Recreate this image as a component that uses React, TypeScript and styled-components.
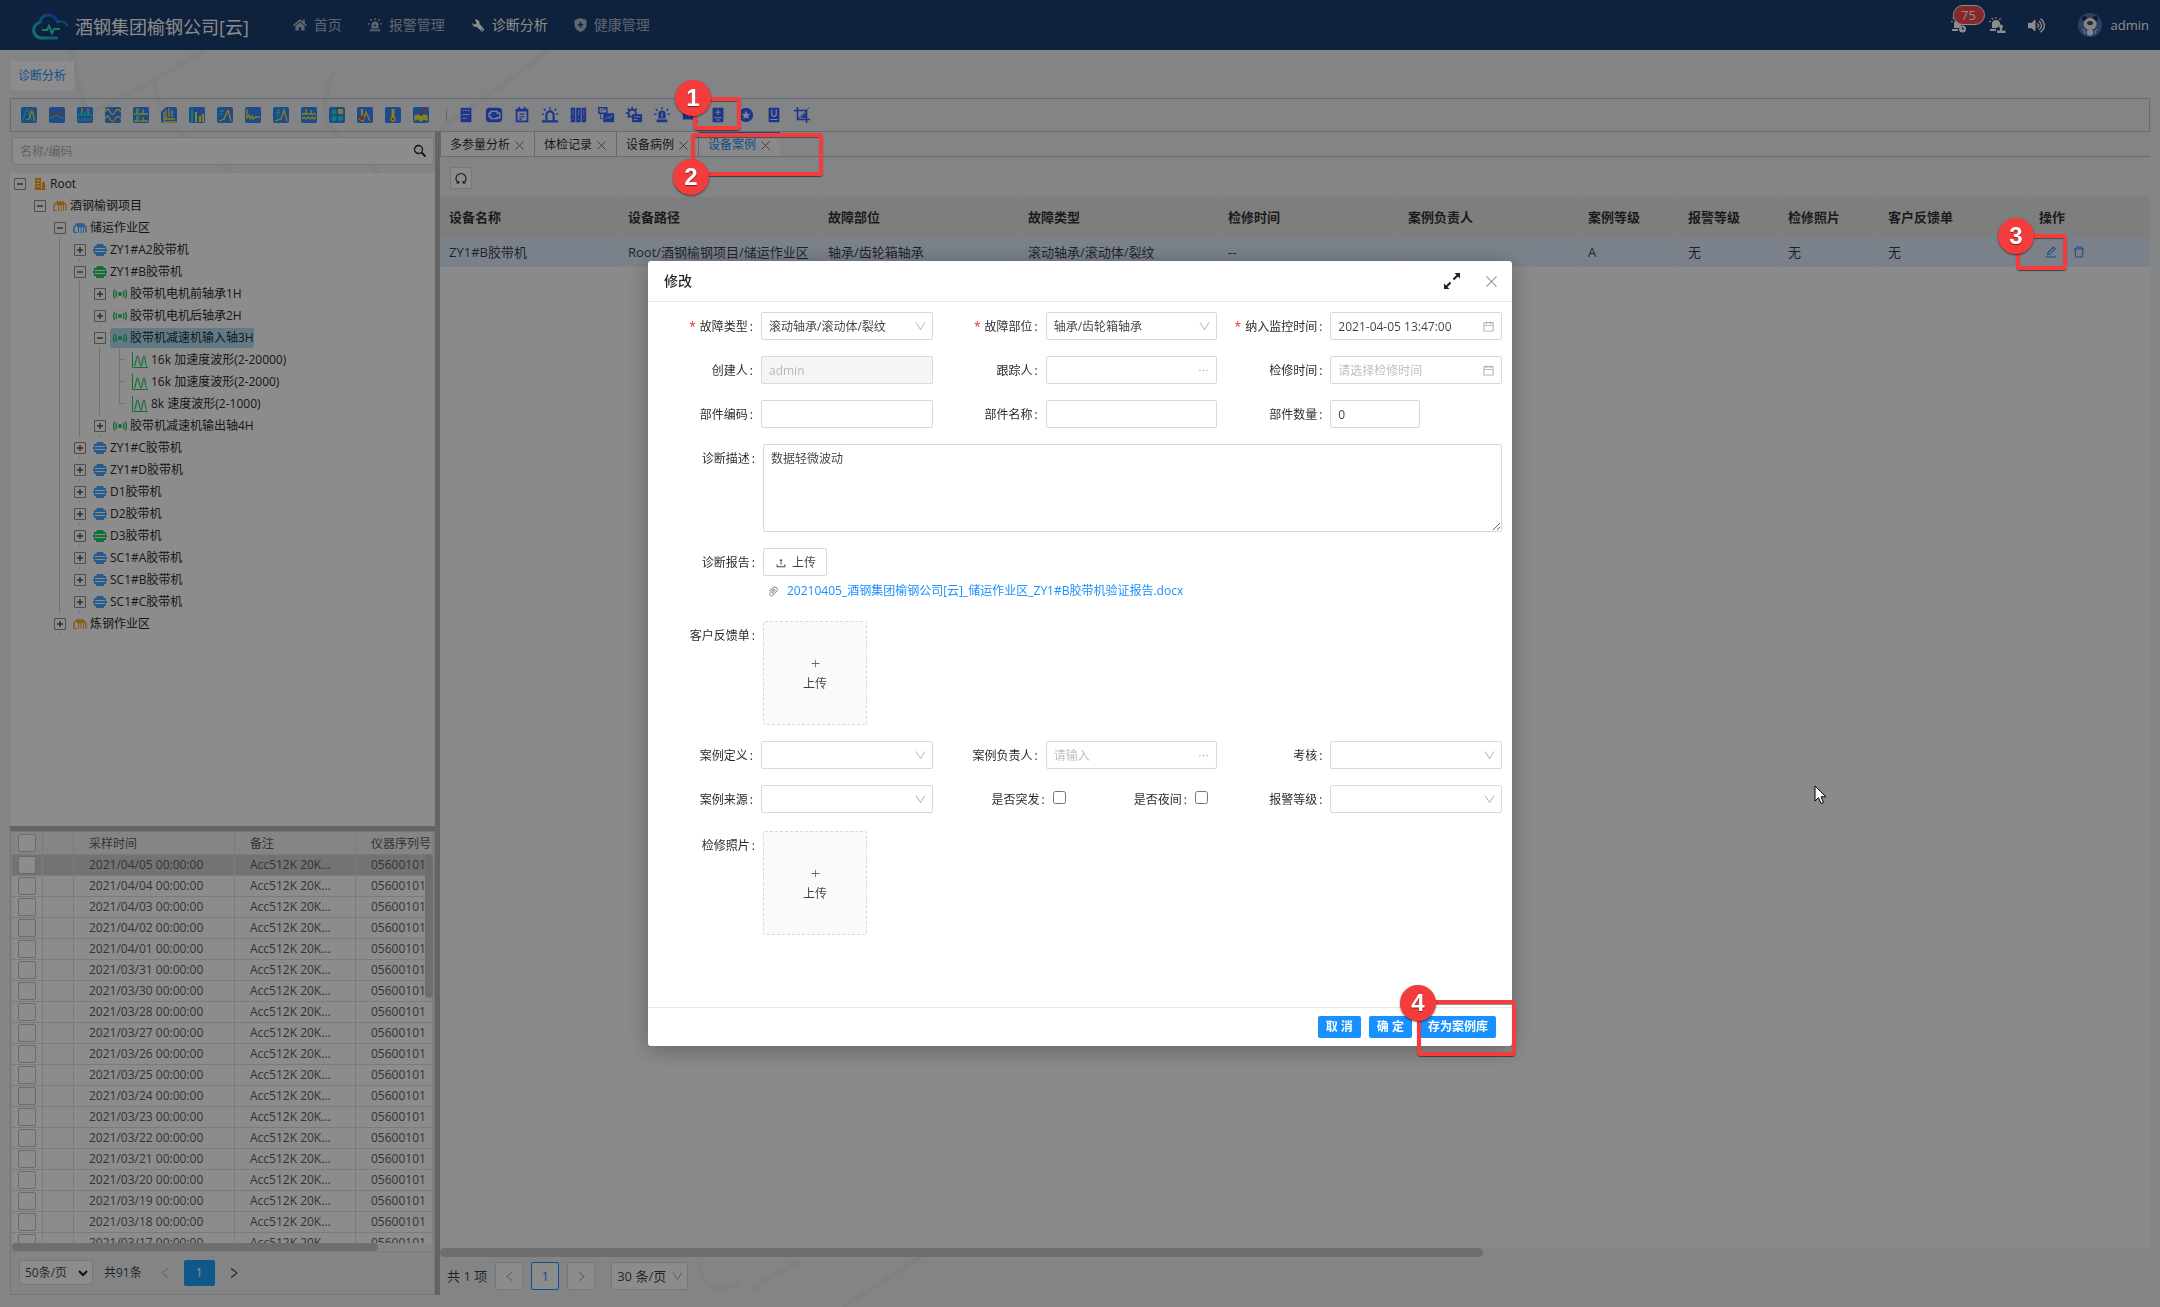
import React from 'react';
import styled, { createGlobalStyle, css } from 'styled-components';
import { FaHome, FaVolumeUp } from 'react-icons/fa';
import {
  AiOutlineCalendar,
  AiOutlineDelete,
  AiOutlineEdit,
  AiOutlineEllipsis,
  AiOutlineLeft,
  AiOutlinePaperClip,
  AiOutlinePlus,
  AiOutlineRight,
  AiOutlineUpload,
} from 'react-icons/ai';

const c = {
  navy: '#1b3c6f',
  page: '#eef0f4',
  line: '#bebfc2',
  split: '#b6b6b6',
  thumb: '#c8c8c8',
  blue: '#1890ff',
  border: '#d9d9d9',
  text: 'rgba(0, 0, 0, 0.75)',
  faint: 'rgba(0, 0, 0, 0.25)',
  tool: '#3488ff',
  tool2: '#335fff',
  red: '#f43c3c',
};

const Global = createGlobalStyle`
  * { box-sizing: border-box; }
  body {
    margin: 0;
    font-family: "Open Sans", "Noto Sans CJK SC", sans-serif;
    font-size: 12px;
    line-height: 20px;
    color: ${c.text};
  }
  button, input, select, textarea { font: inherit; color: inherit; }
  button { padding: 0; border: 0; background: none; cursor: pointer; }
  svg { display: block; flex: none; }
`;

/* ---------- page frame ---------- */

const Page = styled.div`
  position: relative;
  display: flex;
  flex-direction: column;
  height: 100vh;
  overflow: hidden;
  background: ${c.page};
`;

const Backdrop = styled.svg`
  position: absolute;
  inset: 0;
  width: 100%;
  height: 100%;
`;

const TopBar = styled.header`
  position: relative;
  display: flex;
  align-items: center;
  height: 50px;
  flex: none;
  padding: 0 11px 0 31px;
  background: ${c.navy};
  color: #fff;
`;

const Brand = styled.div`
  display: flex;
  align-items: center;
  gap: 6px;
  margin-right: 44px;
  padding-top: 4px;
  font-size: 18px;
  line-height: 24px;
`;

const Nav = styled.nav`
  display: flex;
  gap: 26px;
  flex: 1;
`;

const NavLink = styled.a<{ $active?: boolean }>`
  display: flex;
  align-items: center;
  gap: 7px;
  font-size: 14px;
  color: ${(p) => (p.$active ? '#fff' : 'rgba(255, 255, 255, 0.65)')};
  text-decoration: none;
`;

const UserArea = styled.div`
  display: flex;
  align-items: center;
  gap: 22px;
  color: #fff;
  font-size: 13px;
`;

const IconButton = styled.button`
  position: relative;
  display: flex;
  align-items: center;
  justify-content: center;
`;

const Count = styled.span`
  position: absolute;
  left: 2px;
  top: -12px;
  width: 32px;
  height: 20px;
  border: 1px solid #fff;
  border-radius: 10px;
  background: #f5474b;
  line-height: 18px;
  text-align: center;
`;

const Profile = styled.button`
  display: flex;
  align-items: center;
  gap: 9px;
  margin-left: 11px;
`;

const Main = styled.main`
  position: relative;
  display: flex;
  flex-direction: column;
  flex: 1;
  min-height: 0;
  padding: 11px 10px 12px;
`;

const PageTab = styled.a`
  align-self: flex-start;
  margin-bottom: 8px;
  padding: 0 8px;
  background: #fff;
  color: ${c.blue};
  line-height: 29px;
  text-decoration: none;
`;

const Toolbar = styled.div`
  display: flex;
  align-items: center;
  gap: 10px;
  height: 34px;
  flex: none;
  padding: 0 9px;
  border: 1px solid ${c.line};
`;

const Divider = styled.span`
  width: 1px;
  height: 12px;
  margin: 0 0 0 6px;
  background: #b0b2b6;
`;

const Work = styled.div`
  display: flex;
  flex: 1;
  min-height: 0;
`;

/* ---------- left column ---------- */

const Side = styled.aside`
  display: flex;
  flex-direction: column;
  width: 430px;
  flex: none;
  border-right: 5px solid ${c.split};
`;

const Search = styled.form`
  display: flex;
  align-items: center;
  height: 28px;
  flex: none;
  margin: 5px 1px 8px 2px;
  padding: 0 6px 0 7px;
  border: 1px solid ${c.border};
  border-radius: 2px;
  background: #fff;
`;

const SearchInput = styled.input`
  flex: 1;
  min-width: 0;
  padding: 2px 0 0;
  border: 0;
  outline: 0;
  background: none;
  &::placeholder { color: #b4b4b4; }
`;

const Tree = styled.div`
  flex: 654 1 0;
  min-height: 0;
  overflow: hidden;
  background: #fff;
`;

const HSplit = styled.div`
  height: 5px;
  flex: none;
  background: ${c.split};
`;

const TreeRow = styled.div`
  display: flex;
  align-items: center;
  height: 22px;
`;

const Guide = styled.span<{ $line?: boolean }>`
  align-self: stretch;
  width: 11px;
  margin-left: 9px;
  flex: none;
  border-left: 1px solid ${(p) => (p.$line ? '#cfcfcf' : 'transparent')};
`;

const Toggle = styled.button<{ $tick?: boolean }>`
  display: flex;
  align-items: center;
  align-self: stretch;
  width: 20px;
  flex: none;
  padding-left: 4px;
  ${(p) => p.$tick && css`background: linear-gradient(#cfcfcf, #cfcfcf) 9px 100% / 1px 2px no-repeat;`}
`;

const Leaf = styled.span<{ $last?: boolean }>`
  align-self: stretch;
  width: 11px;
  flex: none;
  margin-left: 9px;
  background:
    linear-gradient(#cfcfcf, #cfcfcf) 0 0 / 1px ${(p) => (p.$last ? '11px' : '100%')} no-repeat,
    linear-gradient(#cfcfcf, #cfcfcf) 0 10px / 6px 1px no-repeat;
`;

const Node = styled.button<{ $selected?: boolean; $leaf?: boolean }>`
  display: flex;
  align-items: center;
  gap: 3px;
  height: 20px;
  padding-left: ${(p) => (p.$leaf ? 2 : 3)}px;
  border-radius: 2px;
  color: #2b2b2b;
  white-space: nowrap;
  ${(p) => p.$selected && css`background: #b0dff5;`}
`;

const Records = styled.section`
  display: flex;
  flex-direction: column;
  flex: 463 1 0;
  min-height: 0;
  border: 1px solid #d8d8d8;
`;

const RecordView = styled.div`
  position: relative;
  flex: 1;
  min-height: 0;
  margin: 0 1px;
  overflow: hidden;
  background: #fff;
`;

const Thumb = styled.div<{ $vertical?: boolean }>`
  position: absolute;
  border-radius: 4px;
  background: ${c.thumb};
  ${(p) =>
    p.$vertical
      ? css`right: 0; top: 22px; width: 8px; height: 144px;`
      : css`left: 0; bottom: 0; width: 87%; height: 8px;`}
`;

const Track = styled.div`
  position: absolute;
  left: 0;
  right: 0;
  bottom: 0;
  height: 8px;
  background: #f4f4f4;
`;

const RecordTable = styled.table`
  width: 100%;
  table-layout: fixed;
  border-collapse: separate;
  border-spacing: 0;
  color: #5e5e5e;

  th, td {
    height: 21px;
    padding: 0 0 0 15px;
    border-right: 1px solid #e0e0e0;
    border-bottom: 1px solid #e0e0e0;
    font-weight: 400;
    line-height: 20px;
    text-align: left;
    white-space: nowrap;
    overflow: hidden;
  }
  th {
    height: 23px;
    padding-top: 2px;
    background: #f2f2f2;
  }
  th:first-child, td:first-child { padding: 0 0 0 6px; }
`;

const RecordRow = styled.tr<{ $current?: boolean }>`
  background: ${(p) => (p.$current ? '#d2d2d2' : '#fff')};
`;

const Tick = styled.input`
  display: block;
  appearance: none;
  width: 18px;
  height: 18px;
  margin: 0;
  border: 1px solid #c4c4c4;
  border-radius: 2px;
  background: #fff;
`;

const RecordPager = styled.div`
  display: flex;
  align-items: center;
  height: 43px;
  flex: none;
  padding: 0 8px 1px;
  border-top: 1px solid #dedede;
`;

const SizeBox = styled.div<{ $w: number; $h: number }>`
  position: relative;
  width: ${(p) => p.$w}px;
  height: ${(p) => p.$h}px;
  & > svg {
    position: absolute;
    right: 5px;
    top: 50%;
    margin-top: -4px;
    pointer-events: none;
  }
`;

const SizeSelect = styled.select`
  appearance: none;
  width: 100%;
  height: 100%;
  padding: 0 5px;
  border: 1px solid ${c.border};
  border-radius: 2px;
  background: #fff;
`;

const Total = styled.span`
  margin: 0 16px 0 11px;
`;

const Current = styled.button`
  width: 31px;
  height: 26px;
  margin: 0 12px;
  border-radius: 2px;
  background: #1e9fff;
  color: #fff;
`;

/* ---------- right column ---------- */

const Content = styled.section`
  display: flex;
  flex-direction: column;
  flex: 1;
  min-width: 0;
`;

const Tabs = styled.div`
  display: flex;
  height: 25px;
  flex: none;
  border-bottom: 1px solid ${c.line};
`;

const Tab = styled.div<{ $active?: boolean }>`
  display: flex;
  align-items: center;
  gap: 5px;
  padding: 2px 10px 0 9px;
  border-left: 1px solid ${c.line};
  box-shadow: ${(p) => (p.$active ? `inset 0 2px ${c.blue}` : 'none')};
  background: #f9f9f9;
  color: ${(p) => (p.$active ? c.blue : 'rgba(0, 0, 0, 0.85)')};
  white-space: nowrap;
`;

const TabName = styled.button`
  line-height: 20px;
`;

const TabClose = styled.button`
  color: #777;
`;

const Actions = styled.div`
  display: flex;
  align-items: center;
  height: 40px;
  flex: none;
  padding: 1px 0 0 10px;
`;

const Reload = styled.button`
  display: flex;
  align-items: center;
  justify-content: center;
  width: 22px;
  height: 22px;
  border: 1px solid ${c.border};
  border-radius: 2px;
  background: #fff;
`;

const TableArea = styled.div`
  flex: 1;
  min-height: 0;
  background: #fcfcfc;
`;

const CaseTable = styled.table`
  width: 100%;
  table-layout: fixed;
  border-collapse: separate;
  border-spacing: 0;
  font-size: 13px;

  th, td {
    padding: 0 0 1px 9px;
    border-right: 1px solid #ebebeb;
    text-align: left;
    white-space: nowrap;
    overflow: hidden;
  }
  th {
    height: 40px;
    background: #e6e6e6;
    color: rgba(0, 0, 0, 0.8);
    font-weight: 600;
  }
  td {
    height: 30px;
    background: #dfecfb;
  }
`;

const RowActions = styled.div`
  display: flex;
  align-items: center;
  gap: 14px;
  padding-left: 5px;
  color: ${c.blue};
`;

const WideThumb = styled.div`
  width: 61%;
  height: 9px;
  flex: none;
  border-radius: 5px;
  background: ${c.thumb};
`;

const Pager = styled.div`
  display: flex;
  align-items: center;
  gap: 8px;
  height: 38px;
  flex: none;
  padding: 0 7px;
  font-size: 13px;
`;

const PageButton = styled.button<{ $active?: boolean }>`
  display: flex;
  align-items: center;
  justify-content: center;
  width: 28px;
  height: 28px;
  border: 1px solid ${(p) => (p.$active ? c.blue : c.border)};
  border-radius: 2px;
  background: #fff;
  color: ${(p) => (p.$active ? c.blue : 'rgba(0, 0, 0, 0.3)')};
`;

const PageSize = styled.div`
  margin-left: 8px;
`;

/* ---------- dialog ---------- */

const Mask = styled.div`
  position: fixed;
  inset: 0;
  display: flex;
  align-items: center;
  justify-content: center;
  background: rgba(0, 0, 0, 0.45);
`;

const Dialog = styled.div`
  display: flex;
  flex-direction: column;
  width: 40%;
  height: 60%;
  border-radius: 3px;
  background: #fff;
  box-shadow: 0 4px 24px rgba(0, 0, 0, 0.3);
`;

const DialogHead = styled.div`
  display: flex;
  align-items: center;
  gap: 26px;
  height: 41px;
  flex: none;
  padding: 0 15px 0 16px;
  border-bottom: 1px solid #e8e8e8;
`;

const DialogTitle = styled.h2`
  flex: 1;
  margin: 0;
  color: rgba(0, 0, 0, 0.85);
  font-size: 14px;
  font-weight: 500;
`;

const Form = styled.form`
  display: grid;
  grid-template-columns: repeat(3, 1fr);
  align-content: start;
  row-gap: 16px;
  flex: 1;
  min-height: 0;
  padding: 10px 10px 0 0;
`;

const FieldBox = styled.div<{ $wide?: boolean }>`
  display: flex;
  align-items: flex-start;
  min-width: 0;
  ${(p) => p.$wide && css`grid-column: 1 / -1;`}
`;

const Label = styled.label<{ $w?: number }>`
  width: ${(p) => p.$w ?? 113}px;
  flex: none;
  padding-right: 8px;
  color: rgba(0, 0, 0, 0.85);
  line-height: 30px;
  height: 28px;
  text-align: right;
  white-space: nowrap;
  &::after { content: ':'; margin-left: 2px; }
`;

const Star = styled.span`
  margin-right: 4px;
  color: #f5222d;
`;

const Control = styled.div`
  position: relative;
  flex: 1;
  min-width: 0;
  height: 28px;
  & > svg {
    position: absolute;
    right: 7px;
    top: 0;
    bottom: 0;
    margin: auto 0;
    color: rgba(0, 0, 0, 0.35);
    pointer-events: none;
  }
`;

const boxed = css`
  display: block;
  width: 100%;
  height: 28px;
  padding: 0 7px;
  border: 1px solid ${c.border};
  border-radius: 2px;
  outline: 0;
  background: #fff;
  color: rgba(0, 0, 0, 0.75);
`;

const TextBox = styled.input<{ $w?: number }>`
  ${boxed}
  ${(p) => p.$w && css`width: ${p.$w}px;`}
  &::placeholder { color: #bfbfbf; }
  &:disabled { background: #f5f5f5; color: ${c.faint}; }
`;

const DropDown = styled.select`
  ${boxed}
  padding: 1px 7px 0;
  appearance: none;
`;

const Area = styled.textarea`
  ${boxed}
  flex: 1;
  width: auto;
  height: 88px;
  padding: 4px 7px;
  line-height: 20px;
  resize: vertical;
`;

const Pair = styled.div`
  display: grid;
  grid-template-columns: 1fr 1fr;
`;

const Check = styled.input`
  width: 13px;
  height: 13px;
  margin: 6px 0 0;
`;

const UploadColumn = styled.div`
  min-height: 57px;
`;

const UploadButton = styled.button`
  display: flex;
  align-items: center;
  gap: 5px;
  height: 28px;
  padding: 1px 10px 0 11px;
  border: 1px solid ${c.border};
  border-radius: 2px;
`;

const FileLink = styled.a`
  display: flex;
  align-items: center;
  gap: 7px;
  height: 20px;
  margin-top: 5px;
  padding-left: 4px;
  color: ${c.blue};
  text-decoration: none;
  & > svg { color: #8c8c8c; }
`;

const UploadCard = styled.button`
  display: flex;
  flex-direction: column;
  align-items: center;
  justify-content: center;
  width: 104px;
  height: 104px;
  padding-top: 6px;
  border: 1px dashed ${c.border};
  border-radius: 2px;
  background: #fafafa;
  & > svg { margin-bottom: 5px; color: #666; }
`;

const PhotoRow = styled.div`
  grid-column: 1 / -1;
  padding-top: 2px;
`;

const DialogFoot = styled.div`
  display: flex;
  align-items: center;
  justify-content: flex-end;
  gap: 8px;
  height: 39px;
  flex: none;
  padding: 0 16px;
  border-top: 1px solid #e8e8e8;
`;

const Primary = styled.button`
  height: 22px;
  padding: 0 8px;
  border-radius: 2px;
  background: ${c.blue};
  color: #fff;
  font-weight: 600;
  line-height: 22px;
`;

/* ---------- step markers over the page ---------- */

const Marks = styled.div`
  position: fixed;
  inset: 0;
  pointer-events: none;
`;

type Spot = { $x: number; $y: number };

const Frame = styled.div<Spot & { $w: number; $h: number }>`
  position: absolute;
  left: ${(p) => p.$x}px;
  top: ${(p) => p.$y}px;
  width: ${(p) => p.$w}px;
  height: ${(p) => p.$h}px;
  border: 4px solid ${c.red};
  border-radius: 4px;
  box-shadow: 0 1px 1px rgba(0, 0, 0, 0.55), inset 0 1px 1px rgba(0, 0, 0, 0.45);
`;

const Bubble = styled.span<Spot>`
  position: absolute;
  left: ${(p) => p.$x - 18}px;
  top: ${(p) => p.$y - 18}px;
  width: 36px;
  height: 36px;
  border-radius: 50%;
  background: ${c.red};
  box-shadow: 0 1px 2px rgba(0, 0, 0, 0.55);
  color: #fff;
  font: 700 24px/36px "Liberation Sans", sans-serif;
  text-align: center;
  text-shadow: 0 1px 1px rgba(0, 0, 0, 0.5);
`;

const Pointer = styled.svg<Spot>`
  position: absolute;
  left: ${(p) => p.$x}px;
  top: ${(p) => p.$y}px;
`;

/* ---------- drawings ---------- */

const Logo = () => (
  <svg width="38" height="28" viewBox="0 0 38 28" fill="none" strokeWidth="3">
    <defs>
      <linearGradient id="logo" x1="0" y1="1" x2="1" y2="0">
        <stop offset="0" stopColor="#19dcd0" />
        <stop offset="0.5" stopColor="#1c9fe0" />
        <stop offset="1" stopColor="#1258e8" />
      </linearGradient>
    </defs>
    <path d="M27 25H10a8 8 0 0 1-1-15.800C10 4 14 2 18 2s8 3 9 8" stroke="url(#logo)" />
    <path d="M26 9c6-2 10 0 10 4" stroke="url(#logo)" strokeWidth="2" />
    <path d="M11 17h5l2-4 3 7 2-4h6" stroke="#22e0d4" strokeWidth="2" />
  </svg>
);

const Siren = ({ size = 14 }: { size?: number }) => (
  <svg width={size} height={size} viewBox="0 0 16 16" fill="currentColor">
    <path d="M4 12V8a4 4 0 0 1 8 0v4zM2 13h12v2H2zM7.300 0h1.400v2.500H7.300zM2 1.800l1-1 1.800 1.800-1 1zM14 1.800l-1-1-1.800 1.800 1 1zM0 6h2.200v1.300H0zM13.800 6H16v1.300h-2.200z" />
    <path d="M8.500 6 6.500 9.200h1.300L7.500 11l2-3H8.200z" fill={c.navy} />
  </svg>
);

const Wrench = () => (
  <svg width="14" height="13" viewBox="-1 0 14 13" fill="currentColor">
    <path fillRule="evenodd" d="M3.500.5C6 .2 8 2.300 7.500 4.800l4 4.600a1.700 1.700 0 0 1-2.400 2.500L4.600 7.800C2.200 8.400 0 6.400.3 4L2 5.500l2-.5.5-2-1.800-1.700zM10.300 10a.7.7 0 1 0 .1 1.300.7.7 0 0 0-.1-1.300z" />
  </svg>
);

const Shield = () => (
  <svg width="13" height="14" viewBox="0 0 13 14" fill="currentColor">
    <path fillRule="evenodd" d="M6.500 0 12.500 2v5c0 3-2.500 5.500-6 7C3 12.500.5 10 .5 7V2zM5.700 4v2H3.900v1.600h1.800v2h1.600v-2h1.800V6H7.300V4z" />
  </svg>
);

const BellClock = () => (
  <svg width="16" height="16" viewBox="0 0 16 16" fill="currentColor">
    <path d="M3 11V7a4 4 0 0 1 8 0v1a4 4 0 0 0-3 3zM1 12h6v2H1zM0 4h2v1H0zM2 0l1.500 2-.8.6L1.200.7z" />
    <path fillRule="evenodd" d="M11.500 8.500a3.500 3.500 0 1 1 0 7 3.500 3.500 0 0 1 0-7zm-.5 1.500v2.500h2.200v-1H12V10z" />
  </svg>
);

const BellUser = () => (
  <svg width="17" height="17" viewBox="0 0 17 17" fill="currentColor">
    <path d="M3 11V7a4 4 0 0 1 8 0v1l-3 3zM1 12h6v2H1zM0 4h2v1H0zM2.200 1.200l1-.8L4.500 2l-.9.8zM6.500 0h1v2h-1zM11 1l1 .7-1.200 1.600-.9-.6z" />
    <circle cx="12" cy="9.500" r="2" />
    <path d="M8 13.500h3V11h2v2.500h3.500V16H8z" />
  </svg>
);

const Avatar = () => (
  <svg width="24" height="24" viewBox="0 0 24 24">
    <circle cx="12" cy="12" r="12" fill="#4f76b8" />
    <circle cx="6.500" cy="5.500" r="2.500" fill="#2b2b33" />
    <circle cx="17.500" cy="5.500" r="2.500" fill="#2b2b33" />
    <ellipse cx="12" cy="11" rx="6.500" ry="6" fill="#f3f3f6" />
    <ellipse cx="12" cy="10" rx="3" ry="2" fill="#4a4a58" />
    <path d="M9.500 17h5l1 3-1.500 2.500h-4L8.500 20z" fill="#f3f3f6" />
    <path d="M4 16l3 2-1 3M20 16l-3 2 1 3" stroke="#dfe4ee" fill="none" />
  </svg>
);

const Glass = () => (
  <svg width="14" height="14" viewBox="0 0 14 14" fill="none" stroke="#222">
    <circle cx="5.500" cy="5.500" r="4" strokeWidth="1.300" />
    <path d="M8.500 8.500l4 4" strokeWidth="1.800" />
  </svg>
);

const Vee = ({ color = 'rgba(0, 0, 0, 0.3)' }: { color?: string }) => (
  <svg width="11" height="9" viewBox="0 0 11 9" fill="none" stroke={color}>
    <path d="M1 .5l4.500 7L10 .5" />
  </svg>
);

const Cross = ({ size, color = 'currentColor' }: { size: number; color?: string }) => (
  <svg width={size} height={size} viewBox="0 0 10 10" fill="none" stroke={color} strokeWidth="1.100">
    <path d="M.4.4l9.200 9.200M9.600.4L.4 9.600" />
  </svg>
);

const Y = '#ffe92e';
const T = '#18e8c8';
const R = '#ff4a20';

const chartArt: [string, React.ReactNode][] = [
  ['趋势', <g key="g"><path d="M1 14C4 13 3 3 6 3s3 11 6 11" stroke={T} /><path d="M5 13l3-1 3-9 3 11" stroke={Y} /><path d="M10 1l2 3" stroke={R} /></g>],
  ['对比', <g key="g"><path d="M1 5l7 6 7-7" stroke={R} /><path d="M1 12l6-4 8 4" stroke={T} /></g>],
  ['频谱', <g key="g"><path d="M1 8h14M2 14v-3M5 14v-3M8 14v-3M11 14v-3M14 14v-3M4 8V5M8 8V4M12 8V5" stroke={T} /><path d="M5 1v5M11 1v5" stroke={Y} /></g>],
  ['波形', <g key="g"><path d="M0 5c2-4 3-4 5 0s3 3 5 0 3-4 6 0" stroke={Y} /><path d="M0 12c2-4 3-4 5 0s3 3 5 0 3-4 6 0" stroke={Y} /></g>],
  ['双谱', <g key="g"><path d="M4 1v6M1 7h14M10 2v5" stroke={Y} /><path d="M4 9v5M1 14h14M10 10v4" stroke={Y} /><path d="M6 1v14" stroke={T} /></g>],
  ['瀑布图', <g key="g"><path d="M0 0h5L0 5z" fill="#eef0f4" /><path d="M2 15h13M3 12h11M5 3v9M8 1v9M11 3v7M3 5v9" stroke={Y} /></g>],
  ['阶次', <g key="g"><path d="M3 2v13" stroke={T} strokeWidth="2" /><path d="M7 5v10M11 9v6M14 7v8" stroke={Y} strokeWidth="2" /></g>],
  ['包络', <g key="g"><path d="M2 4h5M2 7h4" stroke={T} /><path d="M2 14l5-2 4-9 3 11" stroke={Y} /><path d="M10 1l3 3" stroke={R} /></g>],
  ['衰减', <g key="g"><path d="M2 2v9l2-3 1 4 2-3 1 3 2-2h5" stroke={Y} /></g>],
  ['函数', <g key="g"><path d="M7 3H5v9M3 6h4" stroke={T} /><path d="M2 14l6-2 3-9 3 11" stroke={Y} /></g>],
  ['倒谱', <g key="g"><path d="M1 7h4V2v5h5V3v4h5" stroke={Y} /><path d="M1 12l2-2 2 2 2-2 2 2 2-2 2 2 2-2" stroke={Y} /></g>],
  ['多参量', <g key="g" stroke="none"><circle cx="5" cy="5" r="2.500" fill={T} /><rect x="9" y="2" width="5" height="5" rx="1" fill={Y} /><circle cx="5" cy="11.500" r="2.500" fill={T} /><circle cx="11.500" cy="11.500" r="2.500" fill={T} /></g>],
  ['温度趋势', <g key="g"><path d="M5 2v9" stroke={Y} strokeWidth="2" /><path d="M2 12l4 2 3-9 4 9" stroke={Y} /><circle cx="5" cy="11" r="1.500" fill={R} stroke={R} /></g>],
  ['温度', <g key="g"><path d="M8 2v10" stroke={Y} strokeWidth="3" /><circle cx="8" cy="12" r="2" fill={R} stroke={Y} /></g>],
  ['报告', <g key="g"><path d="M2 9l3-1 3 2 3-2 3 1v4l-3-1-3 2-3-2-3 1z" fill={Y} stroke={Y} /><path d="M8 7l4-6" stroke={R} strokeWidth="2" /></g>],
];

const B = c.tool2;
const W = '#eef0f4';

const caseArt: [string, React.ReactNode][] = [
  ['清单', <g key="g"><path d="M3 1h12v16H3z" fill={B} /><path d="M5 4h2M8 4h2M11 4h2M5 8.500h8M5 12.500h5" stroke={W} /></g>],
  ['照相', <g key="g"><rect width="18" height="16" y="1" rx="4" fill={B} /><path d="M5.500 5h7v2h3v5h-3v1h-7v-2h-2V7h2z" fill="none" stroke={W} strokeWidth="1.500" /></g>],
  ['日程', <g key="g"><path d="M3 3h12v13H3z" fill="none" stroke={B} strokeWidth="2" /><path d="M3 4h12M6 0v3M12 0v3" stroke={B} strokeWidth="2" /><path d="M6 8h6M6 11h6M6 13.500h3" stroke={B} strokeWidth="1.400" /></g>],
  ['警报', <g key="g"><path d="M5 15V9a4 4 0 0 1 8 0v6M0 16h18" fill="none" stroke={B} strokeWidth="2.400" /><path d="M9 0v3M2 2l2 2.500M16 2l-2 2.500M0 8h2.500M15.500 8H18" stroke={B} strokeWidth="1.400" /></g>],
  ['档案', <g key="g"><path d="M1 1h5v16H1zM7 1h5v16H7zM13 1h5v16h-5z" fill={B} /><path d="M3.500 3v7M9.500 3v7M15.500 3v7M2.500 13.500h2M8.500 13.500h2M14.500 13.500h2" stroke={W} strokeWidth=".7" /></g>],
  ['图像', <g key="g"><path d="M1 1h9v6H1z" fill="none" stroke={B} strokeWidth="1.600" /><path d="M3 5l2-2 1 1 3-2M3 8v5h3" stroke={B} fill="none" /><path d="M6 7h12v10H6z" fill={B} /><path d="M8 14l3-3 2 2 3-4" fill="none" stroke={W} /></g>],
  ['配置', <g key="g"><circle cx="7" cy="7" r="4" fill="none" stroke={B} strokeWidth="2" /><path d="M7 0v3M0 7h3M2 2l2 2M12 2l-2 2M2 12l2-2" stroke={B} strokeWidth="2" /><path d="M7 8h11v9H7z" fill={B} /><path d="M9 11h7M9 14h4" stroke={W} /></g>],
  ['报警', <g key="g"><path d="M5 13V8a4 4 0 0 1 8 0v5zM3 14h12v3H3z" fill={B} /><path d="M9 0v3M2 2l2 2.500M16 2l-2 2.500M0 8h3M15 8h3" stroke={B} strokeWidth="1.400" /><path d="M10 6l-2 3h2l-2 3" fill="none" stroke={W} /></g>],
  ['标注', <g key="g"><path d="M1 3h15v11H1z" fill={B} /><path d="M8 5v6M5 8h6" stroke={W} /><path d="M11 9l6 8" stroke={B} strokeWidth="2" /></g>],
  ['设备案例', <g key="g"><rect x="3" y="1" width="12" height="16" rx="1" fill={B} /><path d="M9 3v6M6 6h6M5 12h8M7 14.500h4" stroke={W} strokeWidth="1.200" /></g>],
  ['收藏', <g key="g"><circle cx="9" cy="9" r="8" fill={B} /><path d="M9 4l1.500 3.500 3.500.300-2.700 2.300.9 3.400L9 11.700 5.800 13.500l.9-3.400L4 7.800l3.500-.300z" fill={W} /></g>],
  ['附件', <g key="g"><rect x="3" y="1" width="12" height="16" rx="1" fill={B} /><path d="M6.500 3v5a2.500 2.500 0 0 0 5 0V3M5 14h8" fill="none" stroke={W} strokeWidth="1.300" /></g>],
  ['裁剪', <g key="g"><path d="M4 0v14h14M0 4h14v14" fill="none" stroke={B} strokeWidth="1.800" /><path d="M5 13L17 1M8 12l5-5v5z" fill={B} stroke={B} /></g>],
];

const ToggleMark = ({ open }: { open?: boolean }) => (
  <svg width="12" height="12" viewBox="0 0 12 12" fill="none" stroke="#909090">
    <path d="M.5.5h11v11H.5z" />
    <path d={open ? 'M3 6h6' : 'M3 6h6M6 3v6'} stroke="#5a5a5a" strokeWidth="1.500" />
  </svg>
);

type Kind = 'root' | 'plantO' | 'plantB' | 'devB' | 'devG' | 'sensor' | 'wave';

const NodeIcon = ({ kind }: { kind: Kind }) => {
  if (kind === 'root')
    return (
      <svg width="14" height="14" viewBox="0 0 14 14" fill="#ffa412">
        <path fillRule="evenodd" d="M2 1h6v11H2zM9 5h3v7H9zM1 12h12v1H1zM3.500 3v1h3V3zm0 3v1h3V6zm0 3v1h3V9z" />
      </svg>
    );
  if (kind === 'plantO' || kind === 'plantB') {
    const col = kind === 'plantO' ? '#ffa42a' : '#45a8ff';
    return (
      <svg width="14" height="12" viewBox="0 0 14 12" fill="none" stroke={col}>
        <path d="M1 10.500V5l3-3h6l3 3v5.500" strokeWidth="1.500" />
        <path d="M4 4h7" strokeWidth="2.500" />
        <path d="M5.500 5v6M8 5v6M10.500 5v6M1 10.500h3" />
      </svg>
    );
  }
  if (kind === 'devB' || kind === 'devG') {
    const col = kind === 'devG' ? '#1fce5f' : '#45a8ff';
    return (
      <svg width="14" height="12" viewBox="0 0 14 12" fill={col}>
        <path d="M4 0h6l1 2H3zM1 2h12v2H1zM0 5h14v2H0zM1 8h12v2H1zM3 10h8v2H3z" />
        <path d="M1 2h1v8H1zM12 2h1v8h-1z" />
      </svg>
    );
  }
  if (kind === 'sensor')
    return (
      <svg width="14" height="12" viewBox="0 0 14 12" fill="none" stroke="#1fbd5c" strokeWidth="1.300">
        <circle cx="7" cy="6" r="2" fill="#1fbd5c" stroke="none" />
        <path d="M4 3c-1.300 2-1.300 4 0 6M10 3c1.300 2 1.300 4 0 6M2 1.500c-2 3-2 6 0 9M12 1.500c2 3 2 6 0 9" />
      </svg>
    );
  return (
    <svg width="16" height="16" viewBox="0 0 16 16" fill="none" stroke="#1fce5f">
      <path d="M.5 0v15.500H16" />
      <path d="M2 14c2 0 2-10 3.500-10S7.500 14 9 14s1.500-10 3-10 1 10 3 10" strokeWidth="1.200" />
    </svg>
  );
};

const ReloadMark = () => (
  <svg width="12" height="12" viewBox="0 0 12 12" fill="none" stroke="#333">
    <path d="M1.500 11h2.300V8.900M3.800 11A5 5 0 1 1 8.200 11M8.200 8.900V11h2.300" strokeWidth="1.200" />
  </svg>
);

const ExpandMark = () => (
  <svg width="16" height="16" viewBox="0 0 16 16" fill="#222">
    <path d="M16 0v5.500l-2-2-3.800 3.800-1.500-1.500L12.500 2l-2-2zM0 16v-5.500l2 2 3.800-3.800 1.500 1.500L3.500 14l2 2z" />
  </svg>
);

/* ---------- data ---------- */

type Item = { level: number; kind: Kind; text: string; open?: boolean; selected?: boolean; last?: boolean };

const tree: Item[] = [
  { level: 0, kind: 'root', text: 'Root', open: true },
  { level: 1, kind: 'plantO', text: '酒钢榆钢项目', open: true },
  { level: 2, kind: 'plantB', text: '储运作业区', open: true },
  { level: 3, kind: 'devB', text: 'ZY1#A2胶带机' },
  { level: 3, kind: 'devG', text: 'ZY1#B胶带机', open: true },
  { level: 4, kind: 'sensor', text: '胶带机电机前轴承1H' },
  { level: 4, kind: 'sensor', text: '胶带机电机后轴承2H' },
  { level: 4, kind: 'sensor', text: '胶带机减速机输入轴3H', open: true, selected: true },
  { level: 5, kind: 'wave', text: '16k 加速度波形(2-20000)' },
  { level: 5, kind: 'wave', text: '16k 加速度波形(2-2000)' },
  { level: 5, kind: 'wave', text: '8k 速度波形(2-1000)', last: true },
  { level: 4, kind: 'sensor', text: '胶带机减速机输出轴4H' },
  { level: 3, kind: 'devB', text: 'ZY1#C胶带机' },
  { level: 3, kind: 'devB', text: 'ZY1#D胶带机' },
  { level: 3, kind: 'devB', text: 'D1胶带机' },
  { level: 3, kind: 'devB', text: 'D2胶带机' },
  { level: 3, kind: 'devG', text: 'D3胶带机' },
  { level: 3, kind: 'devB', text: 'SC1#A胶带机' },
  { level: 3, kind: 'devB', text: 'SC1#B胶带机' },
  { level: 3, kind: 'devB', text: 'SC1#C胶带机' },
  { level: 2, kind: 'plantO', text: '炼钢作业区' },
];

const days = [
  '04/05', '04/04', '04/03', '04/02', '04/01', '03/31', '03/30', '03/28', '03/27', '03/26',
  '03/25', '03/24', '03/23', '03/22', '03/21', '03/20', '03/19', '03/18', '03/17',
];

const caseColumns: [string, number, string][] = [
  ['设备名称', 179, 'ZY1#B胶带机'],
  ['设备路径', 200, 'Root/酒钢榆钢项目/储运作业区'],
  ['故障部位', 200, '轴承/齿轮箱轴承'],
  ['故障类型', 200, '滚动轴承/滚动体/裂纹'],
  ['检修时间', 180, '--'],
  ['案例负责人', 180, ''],
  ['案例等级', 100, 'A'],
  ['报警等级', 100, '无'],
  ['检修照片', 100, '无'],
  ['客户反馈单', 151, '无'],
  ['操作', 120, ''],
];
const caseTotal = caseColumns.reduce((sum, col) => sum + col[1], 0);

/* ---------- fields ---------- */

type FieldProps = { id: string; label: string; required?: boolean; children: React.ReactNode };

const Field = ({ id, label, required, children }: FieldProps) => (
  <FieldBox>
    <Label htmlFor={id}>
      {required && <Star>*</Star>}
      {label}
    </Label>
    <Control>{children}</Control>
  </FieldBox>
);

const SelectField = ({ id, label, required, value = '' }: { id: string; label: string; required?: boolean; value?: string }) => (
  <Field id={id} label={label} required={required}>
    <DropDown id={id} defaultValue={value}>
      <option value={value}>{value}</option>
    </DropDown>
    <Vee />
  </Field>
);

const UploadField = ({ id, label }: { id: string; label: string }) => (
  <FieldBox $wide>
    <Label htmlFor={id} $w={115}>{label}</Label>
    <UploadCard id={id} type="button">
      <AiOutlinePlus size={11} />
      上传
    </UploadCard>
  </FieldBox>
);

export default function App() {
  return (
    <>
      <Global />
      <Page>
        <Backdrop fill="none" stroke="#e7e9ed" strokeWidth="5" aria-hidden="true">
          <path d="M70 50c12 40 10 62 24 60s70-35 110-60M155 80c0 50 60 80 90 100M335 70c-20 40-10 60 20 80l30 30M550 50L440 130" />
          <path d="M843 1307L920 1257M700 1262c0 30 20 30 40 20M750 1290l50-30" />
        </Backdrop>

        <TopBar>
          <Brand><Logo />酒钢集团榆钢公司[云]</Brand>
          <Nav>
            <NavLink href="#home"><FaHome size={14} />首页</NavLink>
            <NavLink href="#alarm"><Siren />报警管理</NavLink>
            <NavLink href="#diagnosis" $active><Wrench />诊断分析</NavLink>
            <NavLink href="#health"><Shield />健康管理</NavLink>
          </Nav>
          <UserArea>
            <IconButton aria-label="报警消息"><BellClock /><Count>75</Count></IconButton>
            <IconButton aria-label="报警确认"><BellUser /></IconButton>
            <IconButton aria-label="声音"><FaVolumeUp size={17} /></IconButton>
            <Profile><Avatar />admin</Profile>
          </UserArea>
        </TopBar>

        <Main>
          <PageTab href="#diagnosis">诊断分析</PageTab>
          <Toolbar>
            {chartArt.map(([name, art]) => (
              <IconButton key={name} aria-label={name}>
                <svg width="18" height="16" viewBox="-1 0 18 16" fill="none" strokeWidth="1.300">
                  <rect width="16" height="16" rx="2" fill={c.tool} />
                  {art}
                </svg>
              </IconButton>
            ))}
            <Divider />
            {caseArt.map(([name, art]) => (
              <IconButton key={name} aria-label={name}>
                <svg width="18" height="18" viewBox="0 0 20 20">
                  <g transform="translate(1 1)">{art}</g>
                </svg>
              </IconButton>
            ))}
          </Toolbar>

          <Work>
            <Side>
              <Search>
                <SearchInput aria-label="名称/编码" placeholder="名称/编码" />
                <IconButton type="button" aria-label="搜索"><Glass /></IconButton>
              </Search>
              <Tree>
                {tree.map((n) => (
                  <TreeRow key={n.text}>
                    {Array.from({ length: n.level }, (_, i) => (
                      <Guide key={i} $line={i >= 2} />
                    ))}
                    {n.kind === 'wave' ? (
                      <Leaf $last={n.last} />
                    ) : (
                      <Toggle $tick={n.level >= 2} aria-label={`${n.open ? '收起' : '展开'} ${n.text}`}>
                        <ToggleMark open={n.open} />
                      </Toggle>
                    )}
                    <Node $selected={n.selected} $leaf={n.kind === 'wave'}>
                      <NodeIcon kind={n.kind} />
                      {n.text}
                    </Node>
                  </TreeRow>
                ))}
              </Tree>
              <HSplit />
              <Records>
                <RecordView>
                  <RecordTable>
                    <colgroup>
                      <col style={{ width: 31 }} />
                      <col style={{ width: 31 }} />
                      <col style={{ width: 161 }} />
                      <col style={{ width: 121 }} />
                      <col />
                    </colgroup>
                    <thead>
                      <tr>
                        <th><Tick type="checkbox" aria-label="全选" /></th>
                        <th />
                        <th>采样时间</th>
                        <th>备注</th>
                        <th>仪器序列号</th>
                      </tr>
                    </thead>
                    <tbody>
                      {days.map((d, i) => (
                        <RecordRow key={d} $current={i === 0}>
                          <td><Tick type="checkbox" aria-label={`2021/${d}`} /></td>
                          <td />
                          <td>2021/{d} 00:00:00</td>
                          <td>Acc512K 20K...</td>
                          <td>05600101</td>
                        </RecordRow>
                      ))}
                    </tbody>
                  </RecordTable>
                  <Thumb $vertical />
                  <Track />
                  <Thumb />
                </RecordView>
                <RecordPager>
                  <SizeBox $w={74} $h={25}>
                    <SizeSelect aria-label="每页条数"><option>50条/页</option></SizeSelect>
                    <svg width="10" height="9" viewBox="0 0 10 9" fill="none" stroke="#222" strokeWidth="2">
                      <path d="M1 2l4 4 4-4" />
                    </svg>
                  </SizeBox>
                  <Total>共91条</Total>
                  <IconButton aria-label="上一页"><AiOutlineLeft size={14} color="#c4c4c4" /></IconButton>
                  <Current>1</Current>
                  <IconButton aria-label="下一页"><AiOutlineRight size={14} /></IconButton>
                </RecordPager>
              </Records>
            </Side>

            <Content>
              <Tabs>
                {['多参量分析', '体检记录', '设备病例', '设备案例'].map((name, i) => (
                  <Tab key={name} $active={i === 3}>
                    <TabName>{name}</TabName>
                    <TabClose aria-label={`关闭 ${name}`}><Cross size={9} /></TabClose>
                  </Tab>
                ))}
              </Tabs>
              <Actions>
                <Reload aria-label="刷新"><ReloadMark /></Reload>
              </Actions>
              <TableArea>
                <CaseTable>
                  <colgroup>
                    {caseColumns.map(([name, w]) => (
                      <col key={name} style={{ width: `${(w / caseTotal) * 100}%` }} />
                    ))}
                  </colgroup>
                  <thead>
                    <tr>{caseColumns.map(([name]) => <th key={name}>{name}</th>)}</tr>
                  </thead>
                  <tbody>
                    <tr>
                      {caseColumns.map(([name, , value]) => (
                        <td key={name}>
                          {name === '操作' ? (
                            <RowActions>
                              <IconButton aria-label="修改"><AiOutlineEdit size={14} color={c.blue} /></IconButton>
                              <IconButton aria-label="删除"><AiOutlineDelete size={14} color={c.blue} /></IconButton>
                            </RowActions>
                          ) : value}
                        </td>
                      ))}
                    </tr>
                  </tbody>
                </CaseTable>
              </TableArea>
              <WideThumb />
              <Pager>
                <span>共 1 项</span>
                <PageButton aria-label="上一页"><AiOutlineLeft size={13} /></PageButton>
                <PageButton $active>1</PageButton>
                <PageButton aria-label="下一页"><AiOutlineRight size={13} /></PageButton>
                <PageSize>
                  <SizeBox $w={77} $h={28}>
                    <SizeSelect aria-label="每页项数"><option>30 条/页</option></SizeSelect>
                    <Vee color="#aaa" />
                  </SizeBox>
                </PageSize>
              </Pager>
            </Content>
          </Work>
        </Main>
      </Page>

      <Mask>
        <Dialog role="dialog" aria-labelledby="dialog-title">
          <DialogHead>
            <DialogTitle id="dialog-title">修改</DialogTitle>
            <IconButton aria-label="最大化"><ExpandMark /></IconButton>
            <IconButton aria-label="关闭"><Cross size={11} color="#999" /></IconButton>
          </DialogHead>
          <Form>
            <SelectField id="type" label="故障类型" required value="滚动轴承/滚动体/裂纹" />
            <SelectField id="part" label="故障部位" required value="轴承/齿轮箱轴承" />
            <Field id="since" label="纳入监控时间" required>
              <TextBox id="since" defaultValue="2021-04-05 13:47:00" />
              <AiOutlineCalendar size={13} />
            </Field>

            <Field id="creator" label="创建人"><TextBox id="creator" defaultValue="admin" disabled /></Field>
            <Field id="tracker" label="跟踪人">
              <TextBox id="tracker" />
              <AiOutlineEllipsis size={13} />
            </Field>
            <Field id="repair" label="检修时间">
              <TextBox id="repair" placeholder="请选择检修时间" />
              <AiOutlineCalendar size={13} />
            </Field>

            <Field id="code" label="部件编码"><TextBox id="code" /></Field>
            <Field id="name" label="部件名称"><TextBox id="name" /></Field>
            <Field id="qty" label="部件数量"><TextBox id="qty" defaultValue="0" $w={90} /></Field>

            <FieldBox $wide>
              <Label htmlFor="desc" $w={115}>诊断描述</Label>
              <Area id="desc" defaultValue="数据轻微波动" />
            </FieldBox>

            <FieldBox $wide>
              <Label htmlFor="report" $w={115}>诊断报告</Label>
              <UploadColumn>
                <UploadButton id="report" type="button"><AiOutlineUpload size={12} />上传</UploadButton>
                <FileLink href="#report">
                  <AiOutlinePaperClip size={13} />
                  20210405_酒钢集团榆钢公司[云]_储运作业区_ZY1#B胶带机验证报告.docx
                </FileLink>
              </UploadColumn>
            </FieldBox>

            <UploadField id="feedback" label="客户反馈单" />

            <SelectField id="define" label="案例定义" />
            <Field id="owner" label="案例负责人">
              <TextBox id="owner" placeholder="请输入" />
              <AiOutlineEllipsis size={13} />
            </Field>
            <SelectField id="assess" label="考核" />

            <SelectField id="source" label="案例来源" />
            <Pair>
              <FieldBox>
                <Label htmlFor="sudden" $w={120}>是否突发</Label>
                <Check id="sudden" type="checkbox" />
              </FieldBox>
              <FieldBox>
                <Label htmlFor="night" $w={120}>是否夜间</Label>
                <Check id="night" type="checkbox" />
              </FieldBox>
            </Pair>
            <SelectField id="grade" label="报警等级" />

            <PhotoRow>
              <UploadField id="photos" label="检修照片" />
            </PhotoRow>
          </Form>
          <DialogFoot>
            <Primary>取 消</Primary>
            <Primary>确 定</Primary>
            <Primary>存为案例库</Primary>
          </DialogFoot>
        </Dialog>
      </Mask>

      <Marks>
        <Frame $x={693} $y={97} $w={48} $h={33} />
        <Frame $x={691} $y={133} $w={132} $h={43} />
        <Frame $x={2016} $y={234} $w={51} $h={36} />
        <Frame $x={1417} $y={1000} $w={99} $h={56} />
        <Bubble $x={693} $y={98}>1</Bubble>
        <Bubble $x={691} $y={177}>2</Bubble>
        <Bubble $x={2016} $y={236}>3</Bubble>
        <Bubble $x={1418} $y={1003}>4</Bubble>
        <Pointer $x={1814} $y={785} width="13" height="20" viewBox="0 0 13 20" fill="#fff" stroke="#000">
          <path d="M1 1v15l3.500-3.300L7 18.500l2.500-1-2.500-5.700h5z" />
        </Pointer>
      </Marks>
    </>
  );
}
